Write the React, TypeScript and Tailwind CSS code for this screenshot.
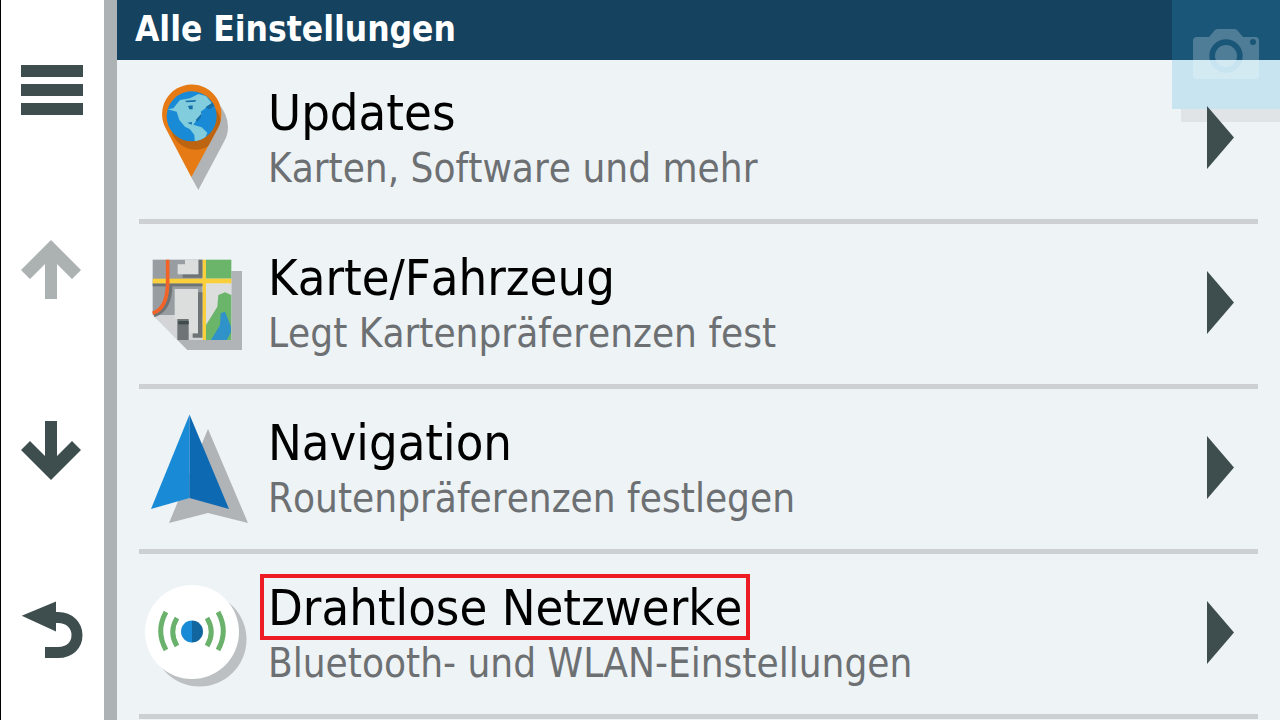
import type { ReactNode } from "react";

function PinIcon() {
  return (
    <svg width="120" height="130" viewBox="0 0 360 390">
      <defs>
        <clipPath id="globe">
          <circle cx="185" cy="139" r="75" />
        </clipPath>
        <clipPath id="pin">
          <path d="M184 322 L107 175 A89 89 0 1 1 265 172 Z" />
        </clipPath>
      </defs>
      <path d="M205 360 L184 322 L265 100 Q294 135 294 172 Q294 195 282 215 Z" fill="#b1b4b7" />
      <path d="M184 322 L107 175 A89 89 0 1 1 265 172 Z" fill="#e67a14" />
      <circle cx="197" cy="163" r="76" fill="#bd6410" clipPath="url(#pin)" />
      <circle cx="185" cy="139" r="75" fill="#198bd6" />
      <g clipPath="url(#globe)">
        <path d="M113 118 L130 115 L150 90 L180 85 L205 72 L228 78 L245 100 L230 112 L212 125 L215 135 L200 150 L190 164 L215 172 L232 188 L225 205 L205 215 L195 220 L193 195 L180 178 L165 170 L148 150 L140 125 Z" fill="#82cddd" />
        <path d="M226 112 L250 96 L258 104 L238 118 Z M197 150 L215 130 L213 142 L202 155 Z M174 108 L188 106 L188 118 L178 118 Z M172 158 L186 156 L185 164 Z M165 92 L198 90 L196 95 L170 97 Z" fill="#176fa8" />
      </g>
    </svg>
  );
}

function MapIcon() {
  return (
    <svg width="120" height="120" viewBox="0 0 360 360">
      <path d="M68 210 L172 315 H336 V78 H304 V285 H142 Z" fill="#b1b4b7" />
      <rect x="68" y="44" width="150" height="166" fill="#989da1" />
      <path d="M68 210 L142 285 H218 V210 Z" fill="#d2d4d6" />
      <path d="M205 44 H218 V98 H158 V88 H205 Z" fill="#6e7376" />
      <path d="M165 44 H205 V88 H143 V58 H165 Z" fill="#dcdedd" />
      <rect x="68" y="115" width="150" height="9" fill="#6e7376" />
      <path d="M204 142 H218 V278 H188 V265 H204 Z" fill="#6e7376" />
      <path d="M134 132 H204 V265 H176 V222 H134 Z" fill="#dcdedd" />
      <rect x="142" y="222" width="34" height="63" fill="#6e7376" />
      <rect x="145" y="228" width="31" height="10" fill="#3f4a4a" />
      <rect x="228" y="44" width="76" height="57" fill="#6bb56a" />
      <rect x="228" y="115" width="76" height="170" fill="#dcdedd" />
      <path d="M228 285 V240 L262 185 L265 150 L285 142 L304 150 V285 Z" fill="#6bb56a" />
      <path d="M243 285 L270 240 L272 205 L285 200 L303 245 V262 L290 285 Z" fill="#2f93c9" />
      <path d="M72 212 Q122 195 122 120" fill="none" stroke="#6e7376" strokeWidth="10" />
      <rect x="68" y="101" width="236" height="14" fill="#f9cf3b" />
      <rect x="218" y="44" width="10" height="241" fill="#f9cf3b" />
      <path d="M68 205 Q113 190 113 110 V44" fill="none" stroke="#f26327" strokeWidth="11" />
    </svg>
  );
}

function ArrowIcon() {
  return (
    <svg width="130" height="130" viewBox="0 0 130 130">
      <path d="M78 24 L118 118 L78 108 L39 118 Z" fill="#b1b4b7" />
      <path d="M59.5 9.5 L59.5 93 L21 104 Z" fill="#198bd6" />
      <path d="M59.5 9.5 L59.5 93 L99 104 Z" fill="#0e69b3" />
    </svg>
  );
}

function WirelessIcon() {
  return (
    <svg width="130" height="130" viewBox="0 0 130 130">
      <circle cx="69.5" cy="69.5" r="47" fill="#bcc0c2" />
      <circle cx="62" cy="62" r="47" fill="#ffffff" />
      <path d="M62 50.5 A11 11 0 0 0 62 72.5 Z" fill="#198bd6" />
      <path d="M62 50.5 A11 11 0 0 1 62 72.5 Z" fill="#12669f" />
      <g fill="none" stroke="#6ab26b" strokeWidth="5">
        <path d="M47 48 Q38.5 62 47 76" />
        <path d="M77 48 Q85.5 62 77 76" />
        <path d="M36 42 Q25.4 61 36 80" />
        <path d="M88 42 Q98.6 61 88 80" />
      </g>
    </svg>
  );
}

function Row({ icon, title, sub, iconClass }: { icon: ReactNode; title: string; sub: string; iconClass: string }) {
  return (
    <div className="mx-[22px] h-[165px] border-b-[5px] border-[#ccd0d3] flex items-center relative">
      <div className={iconClass}>{icon}</div>
      <div className="ml-[129px] pb-[2px] [font-kerning:none]">
        <div className="text-[50.3px] leading-[56px] mb-[4px] text-black">{title}</div>
        <div className="text-[40.1px] leading-[46px] text-[#6d7072]">{sub}</div>
      </div>
      <div className="ml-auto mr-[24px] mb-[3px] w-[27px] h-[63px] bg-[#3e4d4e] relative z-10 [clip-path:polygon(0_0,100%_50%,0_100%)]" />
    </div>
  );
}

export default function App() {
  return (
    <div className="w-[1280px] h-[720px] overflow-hidden flex bg-white relative font-['DejaVu_Sans_Condensed','DejaVu_Sans',sans-serif]">
      <div className="w-[104px] shrink-0 border-l border-black flex flex-col">
        <div className="h-[180px] flex items-center justify-center pr-[1px]">
          <div className="flex flex-col gap-[7px]">
            <div className="w-[62px] h-[12px] bg-[#3e4d4e]" />
            <div className="w-[62px] h-[12px] bg-[#3e4d4e]" />
            <div className="w-[62px] h-[12px] bg-[#3e4d4e]" />
          </div>
        </div>
        <div className="h-[180px] flex items-center justify-center pr-[3px]">
          <svg width="60" height="60" viewBox="0 0 60 60">
            <path d="M30 0 L60 30 L51 39 L36 24 L36 59 L24 59 L24 24 L9 39 L0 30 Z" fill="#acb1b1" />
          </svg>
        </div>
        <div className="h-[180px] flex items-center justify-center pr-[3px]">
          <svg width="60" height="60" viewBox="0 0 60 60">
            <path d="M30 60 L60 30 L51 21 L36 36 L36 1 L24 1 L24 36 L9 21 L0 30 Z" fill="#3e4d4e" />
          </svg>
        </div>
        <div className="h-[180px] flex items-center justify-center pr-[1px]">
          <svg width="62" height="58" viewBox="0 0 62 58">
            <path d="M0.7 14.7 L35 0.5 L35 30.5 Z" fill="#3e4d4e" />
            <path d="M33 16.5 H37 C49 16.5 56 25 56 34 C56 44 49 51.5 37 51.5 H24" fill="none" stroke="#3e4d4e" strokeWidth="11" />
          </svg>
        </div>
      </div>
      <div className="w-[13px] shrink-0 bg-[#adb2b5]" />
      <div className="flex-1 bg-[#eef3f6] min-w-0">
        <div className="h-[60px] bg-[#14425f] flex items-center pl-[18px] pb-[2px] text-white text-[35px] font-bold relative [font-kerning:none]">Alle Einstellungen</div>
        <div className="-mt-px">
          <Row icon={<PinIcon />} iconClass="absolute left-[-9px] top-[11px]" title="Updates" sub="Karten, Software und mehr" />
          <Row icon={<MapIcon />} iconClass="absolute left-[-9px] top-[21px]" title="Karte/Fahrzeug" sub="Legt Kartenpräferenzen fest" />
          <Row icon={<ArrowIcon />} iconClass="absolute left-[-9px] top-[16px]" title="Navigation" sub="Routenpräferenzen festlegen" />
          <Row icon={<WirelessIcon />} iconClass="absolute left-[-9px] top-[16px]" title="Drahtlose Netzwerke" sub="Bluetooth- und WLAN-Einstellungen" />
        </div>
      </div>
      <div className="absolute left-[1181px] top-[109px] w-[99px] h-[13px] bg-[#e0e4e6]" />
      <div className="absolute left-[1172px] top-0 w-[108px] h-[109px] bg-[#30acdc]/20 flex justify-center">
        <svg width="66" height="51" viewBox="0 0 66 51" className="mt-[29px] ml-[-1px]">
          <path
            fillRule="evenodd"
            d="M4 8 H16 L22 1 Q23 0 25 0 H41 Q43 0 44 1 L50 8 H62 A4 4 0 0 1 66 12 V46 A4 4 0 0 1 62 50 H4 A4 4 0 0 1 0 46 V12 A4 4 0 0 1 4 8 Z M33 10.3 A16.7 16.7 0 1 0 33 43.7 A16.7 16.7 0 1 0 33 10.3 Z M33 16 A11 11 0 1 1 33 38 A11 11 0 1 1 33 16 Z M60 10 A3 3 0 1 0 60 16 A3 3 0 1 0 60 10 Z"
            fill="#ffffff"
            fillOpacity="0.23"
          />
        </svg>
      </div>
      <div className="absolute left-[260px] top-[574px] w-[490px] h-[66px] border-[4px] border-[#ed1c24]" />
    </div>
  );
}
